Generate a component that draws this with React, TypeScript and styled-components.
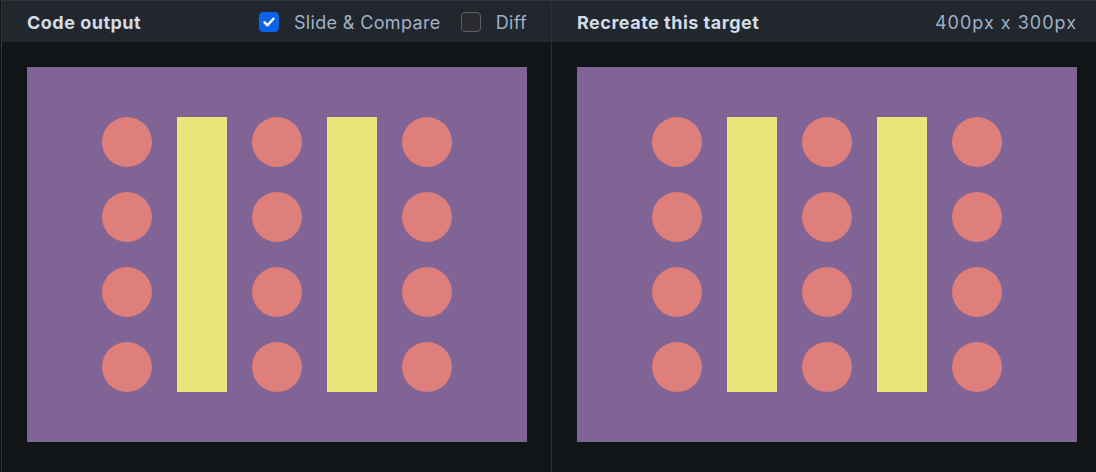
import React from 'react';
import styled, { createGlobalStyle } from 'styled-components';

const GlobalStyle = createGlobalStyle`
  html, body {
    margin: 0;
    padding: 0;
    background: #111518;
    font-family: 'Inter', 'Noto Sans', sans-serif;
  }
`;

const Shell = styled.div`
  display: flex;
  width: 1096px;
  height: 472px;
  padding-left: 1px;
  box-sizing: border-box;
  background: #111518;
  overflow: hidden;
`;

const Panel = styled.section<{ $width: number; $first?: boolean }>`
  display: flex;
  flex-direction: column;
  box-sizing: border-box;
  width: ${(p) => p.$width}px;
  flex-shrink: 0;
  border-left: ${(p) => (p.$first ? '1px solid #2b3138' : 'none')};
  border-right: ${(p) => (p.$first ? '1px solid #2b3138' : 'none')};
`;

const Header = styled.header`
  height: 41px;
  border-top: 1px solid #2e353d;
  background: #22272e;
  display: flex;
  align-items: center;
  padding-left: 25px;
`;

const HeaderInner = styled.div`
  width: 500px;
  display: flex;
  align-items: center;
  justify-content: space-between;
  padding-top: 2px;
`;

const Title = styled.h2`
  margin: 0;
  font-size: 18px;
  font-weight: 700;
  color: #d3dbe6;
  letter-spacing: 0.5px;
`;

const Controls = styled.div`
  display: flex;
  align-items: center;
`;

const Toggle = styled.label`
  display: flex;
  align-items: center;
  gap: 15px;
  font-size: 18px;
  letter-spacing: 0.35px;
  color: #9fb0c6;
  & + & {
    margin-left: 20px;
  }
`;

const Box = styled.span<{ $checked: boolean }>`
  width: 20px;
  height: 20px;
  box-sizing: border-box;
  border-radius: 4px;
  display: flex;
  align-items: center;
  justify-content: center;
  margin-top: -2px;
  background: ${(p) => (p.$checked ? '#0b63e6' : '#2b2a31')};
  border: 1px solid ${(p) => (p.$checked ? '#0b63e6' : '#5a5e66')};
`;

const Meta = styled.span`
  font-size: 18px;
  letter-spacing: 1px;
  color: #9fb0c6;
`;

const Body = styled.div`
  flex: 1;
  padding: 25px 0 0 25px;
`;

const Canvas = styled.div`
  width: 500px;
  height: 375px;
  box-sizing: border-box;
  background: #806496;
  padding: 50px 0 0 75px;
  display: flex;
  align-items: flex-start;
  gap: 25px;
`;

const DotColumn = styled.div`
  display: flex;
  flex-direction: column;
  gap: 25px;
`;

const Dot = styled.div`
  width: 50px;
  height: 50px;
  border-radius: 50%;
  background: #df7f7b;
`;

const Bar = styled.div`
  width: 50px;
  height: 275px;
  background: #ebe67c;
`;

const Check = () => (
  <svg width="14" height="14" viewBox="0 0 14 14" fill="none">
    <path d="M2.5 7.3l3 3 6-6.6" stroke="#fff" strokeWidth="2.4" strokeLinecap="round" strokeLinejoin="round" />
  </svg>
);

const Drawing = () => (
  <Canvas>
    {[0, 1, 2, 3, 4].map((i) =>
      i % 2 === 0 ? (
        <DotColumn key={i}>
          {[0, 1, 2, 3].map((j) => (
            <Dot key={j} />
          ))}
        </DotColumn>
      ) : (
        <Bar key={i} />
      )
    )}
  </Canvas>
);

export default function App() {
  return (
    <>
      <GlobalStyle />
      <Shell>
        <Panel $width={551} $first>
          <Header>
            <HeaderInner>
              <Title>Code output</Title>
              <Controls>
                <Toggle>
                  <Box $checked>
                    <Check />
                  </Box>
                  Slide &amp; Compare
                </Toggle>
                <Toggle>
                  <Box $checked={false} />
                  Diff
                </Toggle>
              </Controls>
            </HeaderInner>
          </Header>
          <Body>
            <Drawing />
          </Body>
        </Panel>
        <Panel $width={544}>
          <Header>
            <HeaderInner>
              <Title>Recreate this target</Title>
              <Meta>400px x 300px</Meta>
            </HeaderInner>
          </Header>
          <Body>
            <Drawing />
          </Body>
        </Panel>
      </Shell>
    </>
  );
}
